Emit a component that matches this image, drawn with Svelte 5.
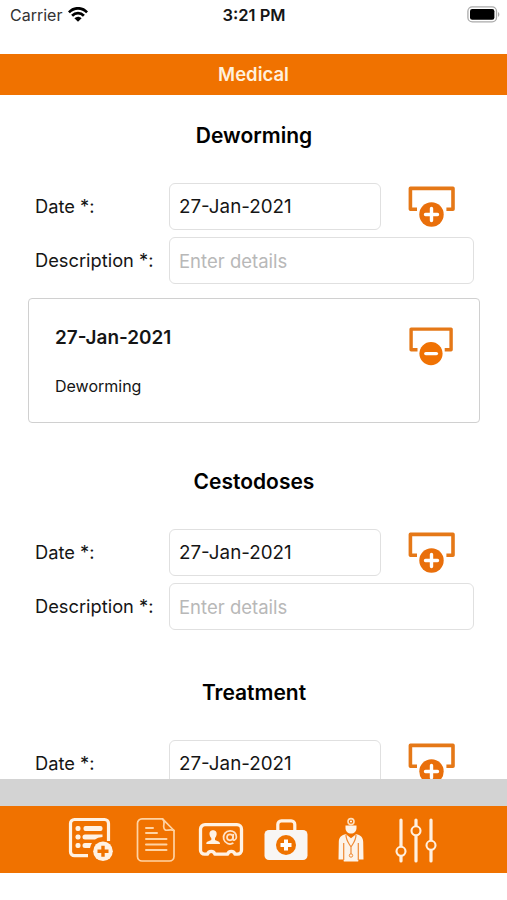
<script>
  let tab = $state('medical')

  let sections = $state([
    { title: 'Deworming', date: '27-Jan-2021', details: '', entries: [{ date: '27-Jan-2021', text: 'Deworming' }] },
    { title: 'Cestodoses', date: '27-Jan-2021', details: '', entries: [] },
    { title: 'Treatment', date: '27-Jan-2021', entries: [] }
  ])

  const tabs = ['register', 'notes', 'contact', 'medical', 'vet', 'settings']

  function add(section) {
    if (!section.details) return
    section.entries.push({ date: section.date, text: section.details })
    section.details = ''
  }

  function remove(section, index) {
    section.entries.splice(index, 1)
  }
</script>

<div class="screen">
  <div class="status">
    <div class="carrier">
      <span>Carrier</span>
      <svg width="20" height="15" viewBox="0 0 20 15">
        <g fill="none" stroke="#000" stroke-width="2.7">
          <path d="M.9 5.4C6-.1 14-.1 19.1 5.4" />
          <path d="M4.1 8.7c3.4-3.5 8.4-3.5 11.8 0" />
        </g>
        <path d="M6.4 11.2c2.2-2 5-2 7.2 0L10 14.8z" />
      </svg>
    </div>
    <span class="clock">3:21 PM</span>
    <svg class="battery" width="34" height="17" viewBox="0 0 34 17">
      <rect x=".9" y=".9" width="28.6" height="15" rx="4.4" fill="none" stroke="#aaa" stroke-width="1.3" />
      <rect x="3" y="3" width="24.4" height="10.8" rx="2.2" />
      <path d="M31 6v4.8c1.8-.7 1.8-4.1 0-4.8z" fill="#aaa" />
    </svg>
  </div>

  <header>Medical</header>

  <main>
    {#each sections as section}
      <section>
        <h2>{section.title}</h2>
        <div class="row">
          <span class="label">Date *:</span>
          <input class="date" bind:value={section.date} />
          <button class="add" aria-label="Add" onclick={() => add(section)}>
            <svg width="48" height="42" viewBox="0 0 48 42">
              <path d="M9 23.2H2.4V2.4h42.600v20.8H38.400" fill="none" stroke="#e57817" stroke-width="3.6" stroke-linejoin="round" />
              <circle cx="23.500" cy="28.5" r="12.2" fill="#e96f0b" />
              <path d="M23.500 22.500v12M17.500 28.5h12" stroke="#fff" stroke-width="3.4" stroke-linecap="round" />
            </svg>
          </button>
        </div>
        {#if section.details !== undefined}
          <div class="row">
            <span class="label">Description *:</span>
            <input placeholder="Enter details" bind:value={section.details} />
          </div>
        {/if}
        {#each section.entries as entry, i}
          <div class="card">
            <div>
              <h3>{entry.date}</h3>
              <p>{entry.text}</p>
            </div>
            <button class="remove" aria-label="Remove" onclick={() => remove(section, i)}>
              <svg width="44" height="39" viewBox="0 0 44 39">
                <path d="M8.5 22.8H2.1V2.1h40v20.7h-6.4" fill="none" stroke="#e57817" stroke-width="3.4" stroke-linejoin="round" />
                <circle cx="22" cy="26.6" r="11.6" fill="#f07203" />
                <path d="M16.8 26.6h10.6" stroke="#fff" stroke-width="3.4" stroke-linecap="round" />
              </svg>
            </button>
          </div>
        {/each}
      </section>
    {/each}
  </main>

  <div class="strip"></div>

  <nav>
    {#each tabs as name}
      <button aria-label={name} onclick={() => (tab = name)}>
        {#if name === 'register'}
          <svg width="46" height="46" viewBox="0 0 46 46">
            <path d="M20 38.700H6.500a4 4 0 0 1-4-4V6.500a4 4 0 0 1 4-4h30a4 4 0 0 1 4 4V24" fill="none" stroke="#fff2e4" stroke-width="3.200" />
            <g fill="#fff2e4">
              <rect x="7.500" y="9" width="5" height="5" rx="2" />
              <rect x="7.500" y="17.500" width="5" height="5" rx="2" />
              <rect x="7.500" y="26" width="5" height="5" rx="2" />
              <rect x="15.500" y="9" width="19" height="5" rx="2" />
              <path d="M17 17.500h17.500v2.500q-5 .3-7.500 2.500H17a2 2 0 0 1 0-5zM17 26h7q-1.500 2-2 5h-5a2 2 0 0 1 0-5z" />
              <circle cx="35" cy="34.300" r="9.800" />
            </g>
            <path d="M35 28.800v11M29.500 34.300h11" stroke="#ef7300" stroke-width="3.400" />
          </svg>
        {:else if name === 'notes'}
          <svg width="40" height="46" viewBox="0 0 40 46" fill="none" stroke="#ffd3a3" stroke-width="1.700" stroke-linecap="round" stroke-linejoin="round">
            <path d="M26.500 1.800H6a4.500 4.500 0 0 0-4.500 4.500v33.200A4.500 4.500 0 0 0 6 44h27.500a4.500 4.500 0 0 0 4.500-4.500v-26z" />
            <path d="M26.500 1.800c3 2.500 1 5.500 1.200 8 .2 3 1.800 3.800 4.300 3.300 2.500-.4 4.500-.5 6 .4" />
            <path d="M10 11h7M10 16h11M10 22h20.500M10 27.500h20.500M10 33h20.500" stroke-width="2" />
          </svg>
        {:else if name === 'contact'}
          <svg width="46" height="46" viewBox="0 0 46 46">
            <path d="M7 7.700h32a4.500 4.500 0 0 1 4.500 4.500v21a4 4 0 0 1-4 4h-2.600a3.700 3.700 0 0 0-7.200 0H16.800a3.700 3.700 0 0 0-7.200 0H6.500a4 4 0 0 1-4-4v-21A4.500 4.500 0 0 1 7 7.700z" fill="none" stroke="#fff2e4" stroke-width="3.300" stroke-linejoin="round" />
            <path d="M15 13.200c3 0 4 2.200 3.600 4.600-.3 1.600-1.100 2.400-1.600 3.300v2l4 1.600c.7.400 1 1.300 1 2.200H8.300c0-1 .3-1.800 1-2.200l4-1.600v-2c-.6-.9-1.500-1.700-1.700-3.300-.4-2.400.5-4.600 3.400-4.600z" fill="#fff2e4" />
            <g fill="none" stroke="#ffe3c8" stroke-width="1.700">
              <circle cx="32" cy="20.300" r="3" />
              <path d="M35.400 16.800l-.5 5c0 2.200 3.500 1.500 3.500-1.900 0-3.700-2.900-6.100-6.300-6.100a6.600 6.600 0 1 0 3.300 12.300" />
            </g>
          </svg>
        {:else if name === 'medical'}
          <svg width="46" height="46" viewBox="0 0 46 46">
            <path d="M14.800 13.500V7.500a3.600 3.600 0 0 1 3.600-3.600h9.800a3.600 3.600 0 0 1 3.600 3.600v6" fill="none" stroke="#fff2e4" stroke-width="3.200" />
            <rect x="1.500" y="13" width="43" height="30" rx="4.500" fill="#f8f6f4" />
            <circle cx="23" cy="28" r="10" fill="#ef7300" />
            <path d="M23 22.500v11M17.500 28h11" stroke="#fff" stroke-width="4" />
          </svg>
        {:else if name === 'vet'}
          <svg width="26" height="46" viewBox="0 0 26 46">
            <g fill="#fdf3e8">
              <path d="M7.500 8.500h11v2.500c0 3.500-2.400 5.600-5.500 5.600s-5.500-2.100-5.500-5.600z" />
              <path d="M8 17.200l5 4 5-4c4.500.7 7 2.800 7.200 7.500l.3 17.800h-5l-.3 2H5.800l-.3-2h-5l.3-17.800c.2-4.700 2.700-6.800 7.200-7.500z" />
            </g>
            <circle cx="13" cy="4.600" r="3" fill="#ef7300" stroke="#ffe0bf" stroke-width="1.600" />
            <circle cx="13" cy="4.600" r="1" fill="#fff" />
            <path d="M8 18c0 5.500 3 8.500 5 12 2-3.500 5-6.500 5-12M13 30v7M5.700 26v17M20.300 26v17" fill="none" stroke="#ef8a34" stroke-width="1.200" />
            <circle cx="13" cy="38.500" r="1.700" fill="#fdf3e8" stroke="#ef8a34" />
          </svg>
        {:else}
          <svg width="42" height="46" viewBox="0 0 42 46" stroke="#fff0df" stroke-linecap="round">
            <path d="M6 3v41M21 3v41M36 3v41" stroke-width="3.200" />
            <g fill="#ef7300" stroke-width="2.100">
              <circle cx="6" cy="34.300" r="4.500" />
              <circle cx="21" cy="13.800" r="4.500" />
              <circle cx="36" cy="28.300" r="4.500" />
            </g>
          </svg>
        {/if}
      </button>
    {/each}
  </nav>
</div>

<style>
  :global(body) {
    margin: 0;
    background: #fff;
  }

  .screen {
    display: flex;
    flex-direction: column;
    height: 900px;
    padding-bottom: 27px;
    box-sizing: border-box;
    overflow: hidden;
    font-family: Inter, "Liberation Sans", sans-serif;
    color: #151515;
  }

  .status {
    display: grid;
    grid-template-columns: 1fr auto 1fr;
    height: 54px;
    padding: 5px 6px 0 7px;
    box-sizing: border-box;
    flex: none;
    font-size: 16px;
    line-height: 20px;
  }

  .carrier {
    display: flex;
    gap: 6px;
    padding-left: 3px;
    color: #333;
  }

  .carrier svg {
    margin-top: 2px;
  }

  .clock {
    font-size: 16.5px;
    font-weight: 600;
  }

  .battery {
    justify-self: end;
    margin-top: 1px;
  }

  header {
    flex: none;
    height: 41px;
    line-height: 41px;
    background: #f07200;
    color: #fff0dc;
    text-align: center;
    font-size: 18.5px;
    font-weight: 600;
  }

  main {
    flex: 1;
    min-height: 0;
    overflow: hidden;
  }

  section {
    padding: 28px 27px 15px 28px;
  }

  h2 {
    margin: 0 0 35px;
    font-size: 21px;
    line-height: 25px;
    font-weight: 600;
    text-align: center;
    color: #000;
  }

  .row {
    display: flex;
    align-items: center;
    height: 47px;
    margin-bottom: 7px;
    padding: 0 6px 0 7px;
  }

  .label {
    width: 134px;
    flex: none;
    padding-bottom: 2px;
    font-size: 18.3px;
  }

  input {
    flex: 1;
    min-width: 0;
    height: 47px;
    padding: 0 9px;
    box-sizing: border-box;
    border: 1.5px solid #e0e0e0;
    border-radius: 6px;
    background: #fff;
    font: inherit;
    font-size: 18.5px;
    color: #151515;
  }

  input.date {
    flex: none;
    width: 212px;
    font-size: 18.8px;
  }

  input::placeholder {
    color: #b8b8b8;
  }

  button {
    display: block;
    padding: 0;
    border: 0;
    background: none;
  }

  svg {
    display: block;
  }

  .add {
    margin-left: 27px;
  }

  .remove {
    margin-top: 1px;
  }

  .card {
    display: flex;
    justify-content: space-between;
    align-items: flex-start;
    height: 125px;
    margin: 14px 0 3px;
    padding: 27px 26px 0 26px;
    box-sizing: border-box;
    border: 1.5px solid #d0d0d0;
    border-radius: 4px;
  }

  h3 {
    margin: 0;
    font-size: 18.9px;
    line-height: 24px;
    font-weight: 600;
  }

  p {
    margin: 26px 0 0;
    font-size: 16px;
    line-height: 20px;
  }

  .strip {
    flex: none;
    height: 27px;
    background: #d3d3d3;
  }

  nav {
    display: flex;
    justify-content: center;
    align-items: center;
    height: 67px;
    flex: none;
    background: #f07200;
  }

  nav button {
    display: flex;
    justify-content: center;
    width: 65px;
  }
</style>
